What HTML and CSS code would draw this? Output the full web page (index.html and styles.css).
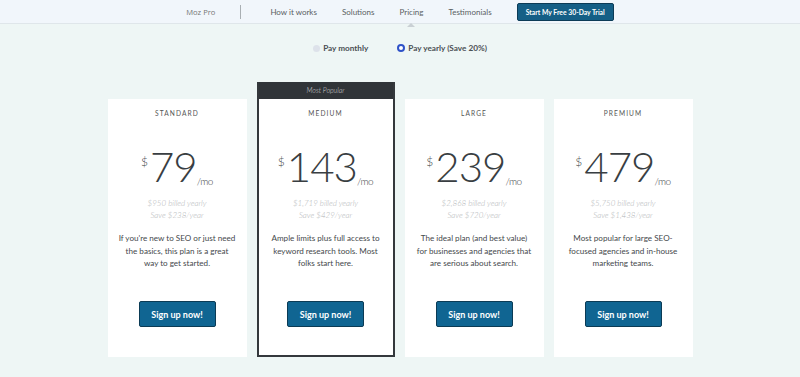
FILE: index.html
```html
<!DOCTYPE html>
<html lang="en">
<head>
  <meta charset="UTF-8">
  <title>Moz Pro Pricing</title>
  <meta name="viewport" content="width=device-width, initial-scale=1.0">
  <link rel="stylesheet" href="styles.css">
</head>
<body>
  <nav class="topnav">
    <span class="brand">Moz Pro</span>
    <span class="divider"></span>
    <a href="#">How it works</a>
    <a href="#">Solutions</a>
    <a href="#" class="active">Pricing</a>
    <a href="#">Testimonials</a>
    <button class="trial-btn">Start My Free 30-Day Trial</button>
  </nav>

  <div class="billing">
    <label class="radio"><span class="dot"></span>Pay monthly</label>
    <label class="radio checked"><span class="dot"></span>Pay yearly (Save 20%)</label>
  </div>

  <div class="plans">
    <div class="card">
      <div class="card-body">
        <div class="plan-name">STANDARD</div>
        <div class="price"><span class="cur">$</span>79<span class="per">/mo</span></div>
        <div class="billed">$950 billed yearly<br>Save $238/year</div>
        <p class="desc">If you're new to SEO or just need the basics, this plan is a great way to get started.</p>
        <button class="signup">Sign up now!</button>
      </div>
    </div>

    <div class="card popular">
      <div class="badge">Most Popular</div>
      <div class="card-body">
        <div class="plan-name">MEDIUM</div>
        <div class="price"><span class="cur">$</span>143<span class="per">/mo</span></div>
        <div class="billed">$1,719 billed yearly<br>Save $429/year</div>
        <p class="desc">Ample limits plus full access to keyword research tools. Most folks start here.</p>
        <button class="signup">Sign up now!</button>
      </div>
    </div>

    <div class="card">
      <div class="card-body">
        <div class="plan-name">LARGE</div>
        <div class="price"><span class="cur">$</span>239<span class="per">/mo</span></div>
        <div class="billed">$2,868 billed yearly<br>Save $720/year</div>
        <p class="desc">The ideal plan (and best value) for businesses and agencies that are serious about search.</p>
        <button class="signup">Sign up now!</button>
      </div>
    </div>

    <div class="card">
      <div class="card-body">
        <div class="plan-name">PREMIUM</div>
        <div class="price"><span class="cur">$</span>479<span class="per">/mo</span></div>
        <div class="billed">$5,750 billed yearly<br>Save $1,438/year</div>
        <p class="desc">Most popular for large SEO-focused agencies and in-house marketing teams.</p>
        <button class="signup">Sign up now!</button>
      </div>
    </div>
  </div>
</body>
</html>
```

FILE: styles.css
```css
body {
  margin: 0;
  background: #eef6f5;
  font-family: Lato, "Liberation Sans", sans-serif;
  color: #444;
}

.topnav {
  height: 24px;
  background: #f1f6fb;
  border-bottom: 1px solid #dfe6ea;
  box-sizing: border-box;
  display: flex;
  align-items: center;
  justify-content: center;
  gap: 25px;
  font-size: 8px;
}

.topnav a {
  color: #5a5f63;
  text-decoration: none;
  position: relative;
}

.topnav a.active::after {
  content: "";
  position: absolute;
  left: 50%;
  bottom: -10px;
  margin-left: -4px;
  border: 4px solid transparent;
  border-bottom-color: #c9d0d4;
  border-top: 0;
}

.brand {
  color: #777;
  font-family: "Open Sans", Lato, sans-serif;
  font-size: 7.6px;
}

.divider {
  width: 1px;
  height: 14px;
  background: #a9afb3;
  margin-right: 4px;
}

.trial-btn {
  height: 18px;
  padding: 0 8px;
  background: #155f86;
  border: 1px solid #0c3b56;
  border-radius: 2px;
  color: #fff;
  font-family: Lato, sans-serif;
  font-weight: 700;
  font-size: 6.8px;
}

.billing {
  display: flex;
  justify-content: center;
  gap: 29px;
  margin-top: 19px;
  font-size: 8.2px;
  font-weight: 700;
  color: #4a4f53;
}

.radio {
  display: flex;
  align-items: center;
  gap: 3px;
}

.dot {
  width: 7px;
  height: 7px;
  border-radius: 50%;
  background: #dde2ea;
}

.radio.checked .dot {
  width: 4px;
  height: 4px;
  background: #fff;
  border: 2px solid #2f52c8;
}

.plans {
  display: flex;
  justify-content: center;
  align-items: flex-end;
  gap: 10px;
  margin-top: 29px;
}

.card {
  width: 139px;
  background: #fff;
  box-sizing: border-box;
}

.card.popular {
  border: 2px solid #34383c;
  border-top-width: 0;
  width: 138px;
}

.badge {
  height: 17px;
  line-height: 16px;
  background: #303438;
  color: #d8d8d8;
  font-size: 7px;
  font-style: italic;
  font-weight: 300;
  text-align: center;
}

.card-body {
  text-align: center;
  padding: 9px 11px 30px;
}

.popular .card-body {
  padding: 9px 10px 28px;
}

.plan-name {
  font-size: 6.6px;
  letter-spacing: 1.1px;
  line-height: 10px;
  color: #555;
}

.price {
  margin-top: 27px;
  height: 42px;
  font-size: 42px;
  font-weight: 300;
  line-height: 42px;
  color: #393e42;
  letter-spacing: -1px;
}

.cur {
  font-size: 12px;
  line-height: 1;
  vertical-align: 16px;
  margin-right: 2px;
  letter-spacing: 0;
}

.per {
  font-size: 10px;
  line-height: 1;
  vertical-align: -3px;
  letter-spacing: -0.5px;
}

.billed {
  margin-top: 10px;
  font-size: 8px;
  line-height: 12px;
  font-style: italic;
  font-weight: 300;
  color: #b0b3b5;
}

.desc {
  margin: 11px 0 0;
  height: 38px;
  font-size: 8.1px;
  line-height: 12.5px;
  color: #45494c;
}

.signup {
  margin-top: 31px;
  width: 77px;
  height: 26px;
  background: #106592;
  border: 1px solid #0b3b55;
  border-radius: 2px;
  color: #fff;
  font-family: Lato, sans-serif;
  font-weight: 700;
  font-size: 9px;
}
```
